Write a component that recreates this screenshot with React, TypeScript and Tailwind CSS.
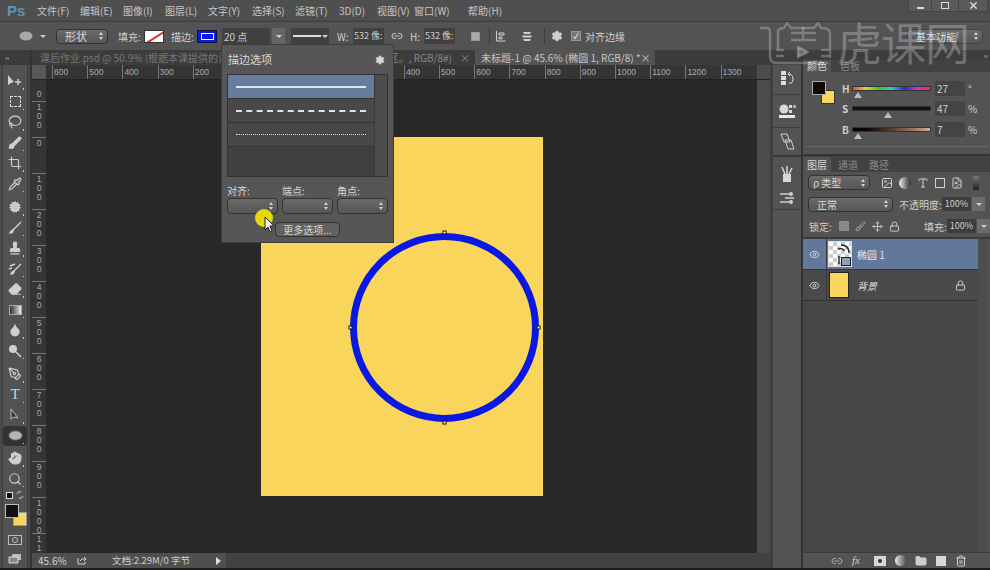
import { Brush, Crop, Droplet, Eraser, Hand, Lasso, Link2, Lock, Move, PenTool, Pipette, Search, Settings, Stamp, Trash2, X, Eye, Folder, FileImage, Type, Image } from "lucide-react";
import type { ReactNode } from "react";

const cjk = { fontFamily: '"Noto Sans CJK SC", "Liberation Sans", sans-serif' };

const menus = [
  ["文件(F)", "w-[43px]"],
  ["编辑(E)", "w-[43px]"],
  ["图像(I)", "w-[42px]"],
  ["图层(L)", "w-[43px]"],
  ["文字(Y)", "w-[44px]"],
  ["选择(S)", "w-[43px]"],
  ["滤镜(T)", "w-[44px]"],
  ["3D(D)", "w-[38px]"],
  ["视图(V)", "w-[37px]"],
  ["窗口(W)", "w-[54px]"],
  ["帮助(H)", "w-[40px]"],
];

const hRuler = ["600", "500", "400", "300", "200", "100", "0", "100", "200", "300", "400", "500", "600", "700", "800", "900", "1000", "1100", "1200", "1300"];
const vRuler = ["100", "0", "100", "200", "300", "400", "500", "600", "700", "800", "900", "1000"];

function Caret({ className = "" }: { className?: string }) {
  return <div className={"flex flex-col gap-[2px] " + className}>
    <div className="w-0 h-0 border-x-[2.5px] border-x-transparent border-b-[3px] border-b-[#d0d0d0]" />
    <div className="w-0 h-0 border-x-[2.5px] border-x-transparent border-t-[3px] border-t-[#d0d0d0]" />
  </div>;
}

function Down() {
  return <div className="w-0 h-0 border-x-[3px] border-x-transparent border-t-[3px] border-t-[#d0d0d0]" />;
}

function Select({ className, label }: { className: string; label?: string }) {
  return (
    <div className={"flex items-center justify-between rounded-sm border border-[#333] bg-gradient-to-b from-[#6a6a6a] to-[#565656] pl-2 pr-1 text-[#d8d8d8] " + className}>
      <span>{label}</span>
      <Caret />
    </div>
  );
}

function Tool({ children, active, sep }: { children: ReactNode; active?: boolean; sep?: "sm" | "lg" }) {
  return (
    <div className={"relative flex h-[20.5px] shrink-0 items-center justify-center " + (active ? "rounded-sm bg-[#333] " : "") + (sep === "lg" ? "mb-[3px] " : sep === "sm" ? "mb-[2px] " : "")}>
      {children}
      <div className="absolute bottom-[2px] right-[3px] h-[1.5px] w-[1.5px] bg-[#ccc]" />
    </div>
  );
}

const ic = "text-[#cfcfcf]";

function Toolbar() {
  return (
    <div className="flex w-[32px] shrink-0 flex-col border-r-2 border-[#333] bg-[#4a4a4a]">
      <div className="flex h-[15px] items-center bg-[#3c3c3c] pl-[5px] text-[7px] leading-none text-[#ccc]">››</div>
      <div className="mx-[2px] flex flex-1 flex-col border-x border-[#3d3d3d] bg-[#525252] pt-[6px]">
        <Tool>
          <svg width="18" height="14" viewBox="0 0 18 14"><path d="M2 1v10l3-2 3-1z" fill="#d0d0d0" /><path d="M12 5v6M9 8h6" stroke="#d0d0d0" strokeWidth="1.4" /></svg>
        </Tool>
        <Tool>
          <div className="h-[11px] w-[11px] border border-dashed border-[#d8d8d8]" />
        </Tool>
        <Tool><Lasso size={14} className={ic} /></Tool>
        <Tool><Brush size={14} className={ic} fill="#cfcfcf" /></Tool>
        <Tool><Crop size={14} className={ic} /></Tool>
        <Tool sep="lg"><Pipette size={14} className={ic} /></Tool>
        <Tool>
          <svg width="14" height="14" viewBox="0 0 14 14"><circle cx="7" cy="7" r="4.5" fill="#c8c8c8" stroke="#ddd" strokeDasharray="1.5 1" strokeWidth="2" /></svg>
        </Tool>
        <Tool>
          <svg width="14" height="14" viewBox="0 0 14 14"><path d="M13 1 5 9" stroke="#d0d0d0" strokeWidth="1.4" /><path d="M5 8 2 10l-1 3 4-1 1-3z" fill="#d0d0d0" /></svg>
        </Tool>
        <Tool><Stamp size={14} className={ic} fill="#cfcfcf" /></Tool>
        <Tool>
          <svg width="14" height="14" viewBox="0 0 14 14"><path d="M13 2 6 9M2 4l5-2M1 7l3-1" stroke="#d0d0d0" strokeWidth="1.4" /><path d="M6 8 3 10l-1 3 4-1 1-3z" fill="#d0d0d0" /></svg>
        </Tool>
        <Tool><Eraser size={14} className={ic} fill="#cfcfcf" /></Tool>
        <Tool>
          <div className="h-[10px] w-[13px] border border-[#aaa] bg-gradient-to-r from-[#333] to-[#eee]" />
        </Tool>
        <Tool><Droplet size={14} className={ic} fill="#cfcfcf" /></Tool>
        <Tool sep="lg">
          <svg width="14" height="14" viewBox="0 0 14 14"><circle cx="5" cy="5" r="4" fill="#d0d0d0" /><path d="m8 8 5 5" stroke="#d0d0d0" strokeWidth="1.6" /></svg>
        </Tool>
        <Tool><PenTool size={14} className={ic} /></Tool>
        <Tool><span className="text-[15px] leading-none text-[#d0d0d0]" style={{ fontFamily: '"Liberation Serif", serif' }}>T</span></Tool>
        <Tool>
          <svg width="14" height="14" viewBox="0 0 14 14"><path d="M3 1v10l3-2 4 1z" fill="#333" stroke="#bbb" /></svg>
        </Tool>
        <Tool active sep="sm">
          <svg width="15" height="11" viewBox="0 0 15 11"><ellipse cx="7.5" cy="5.5" rx="6.5" ry="4.5" fill="#b5b5b5" stroke="#777" /></svg>
        </Tool>
        <Tool><Hand size={14} className={ic} fill="#cfcfcf" /></Tool>
        <Tool><Search size={14} className={ic} /></Tool>
        <div className="flex h-[12px] shrink-0 items-center justify-between px-[3px]">
          <div className="relative h-[7px] w-[7px] border border-[#ddd] bg-[#111]" />
          <svg width="8" height="8" viewBox="0 0 8 8"><path d="M1 3a3 3 0 0 1 4-2M7 5a3 3 0 0 1-4 2" stroke="#ddd" fill="none" /></svg>
        </div>
        <div className="relative mt-[3px] h-[24px] shrink-0">
          <div className="absolute left-[10px] top-[8px] h-[14px] w-[14px] border border-[#999] bg-[#fbd65c]" />
          <div className="absolute left-[2px] top-0 h-[14px] w-[14px] border border-[#bbb] bg-[#111]" />
        </div>
        <div className="mt-[6px] flex h-[12px] shrink-0 items-center justify-center">
          <div className="flex h-[10px] w-[14px] items-center justify-center border border-[#bbb]"><div className="h-[6px] w-[6px] rounded-full border border-[#bbb]" /></div>
        </div>
        <div className="mt-[6px] flex h-[12px] shrink-0 items-center justify-center">
          <svg width="14" height="11" viewBox="0 0 14 11"><path d="M4 1h9v6H4z" fill="#bbb" /><path d="M1 4h9v6H1z" fill="#888" stroke="#ddd" /></svg>
        </div>
      </div>
    </div>
  );
}

function Slider({ label, value, unit, track, pos }: { label: string; value: string; unit: string; track: string; pos: string }) {
  return (
    <div className="flex h-[20.5px] items-center">
      <div className="w-[9px] text-[10px] font-bold text-[#cfcfcf]">{label}</div>
      <div className="relative ml-[1px] w-[79px]">
        <div className={"h-[5px] border border-[#333] " + track} />
        <div className={"absolute top-[6px] h-0 w-0 border-x-[4px] border-x-transparent border-b-[6px] border-b-[#bdbdbd] " + pos} />
      </div>
      <div className="ml-[4px] flex h-[15px] w-[30px] items-center bg-[#444] pl-[2px] text-[10px] text-[#d0d0d0]">{value}</div>
      <div className="ml-[3px] text-[10px] text-[#cfcfcf]">{unit}</div>
    </div>
  );
}

function ColorPanel() {
  return (
    <div className="flex h-[106px] shrink-0 flex-col border-b-2 border-[#333] bg-[#535353]">
      <div className="flex h-[10px] items-center justify-end bg-[#3d3d3d] pr-[2px] text-[7px] leading-none text-[#ccc]">››</div>
      <div className="flex h-[12px] items-end bg-[#424242] text-[10px] leading-[12px]">
        <div className="flex h-[12px] w-[28px] items-center justify-center bg-[#535353] text-[#d8d8d8]">颜色</div>
        <div className="ml-[5px] flex h-[12px] w-[28px] items-center justify-center text-[#8b8b8b]">色板</div>
      </div>
      <div className="flex flex-1 pl-[9px] pt-[9px]">
        <div className="relative h-[24px] w-[24px] shrink-0">
          <div className="absolute left-[9px] top-[9px] h-[14px] w-[14px] border border-[#333] bg-[#fbd65c]" />
          <div className="absolute left-0 top-0 h-[14px] w-[14px] border border-[#aaa] bg-[#120b07]" />
        </div>
        <div className="ml-[6px] -mt-[3px]">
          <Slider label="H" value="27" unit="°" track="bg-[linear-gradient(to_right,#e44,#ec3,#3c3,#3cc,#23c,#c3c,#e35)]" pos="left-[2px]" />
          <Slider label="S" value="47" unit="%" track="bg-[#111]" pos="left-[32px]" />
          <Slider label="B" value="7" unit="%" track="bg-gradient-to-r from-[#000] to-[#d9a988]" pos="left-[2px]" />
        </div>
      </div>
      <div className="mx-[2px] mb-[7px] h-px bg-[#666]" />
    </div>
  );
}

function LayerRow({ selected, children }: { selected?: boolean; children: ReactNode }) {
  return (
    <div className={"flex h-[31px] shrink-0 items-center border-b border-[#333] " + (selected ? "bg-[#62789a]" : "bg-[#4a4a4a]")}>
      <div className="flex h-full w-[24px] items-center justify-center border-r border-[#3a3a3a]">
        <Eye size={11} className="text-[#d8d8d8]" />
      </div>
      {children}
    </div>
  );
}

function LayersPanel() {
  return (
    <div className="flex min-h-0 flex-1 flex-col bg-[#535353]">
      <div className="flex h-[16px] shrink-0 items-end bg-[#424242] text-[10px] leading-[15px] text-[#8b8b8b]">
        <div className="flex h-[15px] w-[28px] items-center justify-center bg-[#535353] text-[#d8d8d8]">图层</div>
        <div className="ml-[3px] w-[28px] text-center">通道</div>
        <div className="ml-[3px] w-[28px] text-center">路径</div>
      </div>
      <div className="flex h-[21px] shrink-0 items-center pl-[5px]">
        <Select className="h-[15px] w-[62px] !pl-1 text-[10px]" label="ρ 类型" />
        <div className="ml-[11px] flex items-center gap-[6px] text-[#d0d0d0]">
          <Image size={12} />
          <div className="h-[12px] w-[12px] rounded-full bg-gradient-to-r from-[#eee] to-[#333]" />
          <Type size={12} />
          <div className="h-[10px] w-[10px] border border-[#d0d0d0]" />
          <FileImage size={12} />
        </div>
        <div className="ml-[10px] h-[14px] w-[6px] bg-gradient-to-b from-[#777] to-[#222]" />
      </div>
      <div className="flex h-[22px] shrink-0 items-center pl-[5px] text-[10px] text-[#d0d0d0]">
        <Select className="h-[15px] w-[85px] text-[10px]" label="正常" />
        <span className="ml-[6px] w-[43px] whitespace-nowrap">不透明度:</span>
        <div className="flex h-[14px] w-[29px] items-center justify-center bg-[#3d3d3d] text-[9px]">100%</div>
        <div className="ml-[1px] flex h-[14px] w-[13px] items-center justify-center bg-[#6b6b6b]"><Down /></div>
      </div>
      <div className="flex h-[24px] shrink-0 items-center border-b-2 border-[#3a3a3a] pl-[6px] text-[10px] text-[#d0d0d0]">
        <span className="w-[30px]">锁定:</span>
        <div className="flex items-center gap-[6px]">
          <div className="h-[10px] w-[10px] bg-[#8a8a8a]" />
          <Brush size={11} className="text-[#aaa]" />
          <Move size={11} />
          <Lock size={11} />
        </div>
        <span className="ml-[24px] w-[23px]">填充:</span>
        <div className="flex h-[14px] w-[29px] items-center justify-center bg-[#3d3d3d] text-[9px]">100%</div>
        <div className="ml-[1px] flex h-[14px] w-[13px] items-center justify-center bg-[#6b6b6b]"><Down /></div>
      </div>
      <div className="flex min-h-0 flex-1">
        <div className="flex w-[175px] flex-col bg-[#474747]">
          <LayerRow selected>
            <div className="relative ml-[1px] h-[26px] w-[24px] border border-[#ddd] bg-[repeating-conic-gradient(#ccc_0_25%,#fff_0_50%)] bg-[length:8px_8px]">
              <svg className="absolute left-0 top-0" width="22" height="24" viewBox="0 0 22 24"><path d="M12 3c5 0 8 3 8 8M9 7c3-1 6 0 6 2M10 14v8" stroke="#222" strokeWidth="1.4" fill="none" /></svg>
              <div className="absolute bottom-0 right-0 h-[9px] w-[10px] border border-[#222] bg-[#8da0b8]" />
            </div>
            <span className="ml-[5px] text-[10px] text-[#e0e4ea]">椭圆 1</span>
          </LayerRow>
          <LayerRow>
            <div className="ml-[2px] h-[26px] w-[20px] border border-[#222] bg-[#fbd65c]" />
            <span className="ml-[8px] text-[10px] italic text-[#ddd]">背景</span>
            <Lock size={11} className="ml-auto mr-[12px] text-[#cfcfcf]" />
          </LayerRow>
        </div>
        <div className="w-[10px] bg-[#4d4d4d]" />
      </div>
      <div className="flex h-[16px] shrink-0 items-center gap-[9px] border-t border-[#3a3a3a] bg-[#535353] pl-[28px] text-[#cfcfcf]">
        <Link2 size={12} className="text-[#aaa]" />
        <span className="w-[13px] text-[11px] italic" style={{ fontFamily: '"Liberation Serif", serif' }}>fx</span>
        <div className="flex h-[10px] w-[12px] items-center justify-center bg-[#d8d8d8]"><div className="h-[4px] w-[4px] rounded-full bg-[#333]" /></div>
        <div className="h-[11px] w-[11px] rounded-full bg-gradient-to-r from-[#eee] to-[#555]" />
        <Folder size={12} fill="#cfcfcf" />
        <div className="h-[10px] w-[10px] bg-[#d8d8d8]" />
        <Trash2 size={12} />
      </div>
    </div>
  );
}

function Dock() {
  return (
    <div className="flex w-[33px] shrink-0 flex-col border-r-2 border-[#333] bg-[#3f3f3f] pl-[3px]">
      <div className="h-[15px] shrink-0" />
      <div className="flex flex-1 flex-col items-center bg-[#535353] text-[#cfcfcf]">
        <div className="flex h-[30px] w-full items-center justify-center border-b border-[#3e3e3e] pb-[4px]">
          <div className="flex flex-col gap-[1px]"><div className="h-[4px] w-[5px] bg-[#ddd]" /><div className="h-[4px] w-[5px] bg-[#ddd]" /><div className="h-[4px] w-[5px] bg-[#ddd]" /></div>
          <svg className="ml-[1px]" width="7" height="12" viewBox="0 0 7 12"><path d="M1 2q5 0 5 5t-4 4M1 2l2-2M1 2l2 2" stroke="#ddd" fill="none" /></svg>
        </div>
        <div className="flex h-[33px] w-full items-center justify-center border-b border-[#3e3e3e]">
          <svg width="18" height="15" viewBox="0 0 18 15"><circle cx="6" cy="5" r="4.5" fill="#d8d8d8" /><rect x="11" y="1" width="3" height="3" fill="#d8d8d8" /><rect x="11" y="6" width="3" height="3" fill="#d8d8d8" /><rect x="15" y="1" width="3" height="3" fill="#aaa" /><rect x="1" y="11" width="16" height="3" fill="#e8e8e8" /></svg>
        </div>
        <div className="flex h-[29px] w-full items-center justify-center border-b-2 border-[#3a3a3a]">
          <svg width="17" height="17" viewBox="0 0 17 17" fill="none" stroke="#d0d0d0"><path d="M2 1h6l3 8H5zM6 7h6l3 9H9z" /></svg>
        </div>
        <div className="flex h-[53px] w-full flex-col items-center gap-[10px] border-b border-[#3e3e3e] pt-[9px]">
          <svg width="14" height="16" viewBox="0 0 14 16"><path d="M3 8h8v8H3z" fill="#d8d8d8" /><path d="M5 8 2 1M7 8V0M9 8l3-6" stroke="#d8d8d8" strokeWidth="1.5" /></svg>
          <svg width="16" height="12" viewBox="0 0 16 12"><path d="M1 2h9M1 10h9M6 6h9" stroke="#d0d0d0" strokeWidth="1.6" /><circle cx="12" cy="2" r="2" fill="#d0d0d0" /><circle cx="12" cy="10" r="2" fill="#d0d0d0" /></svg>
        </div>
      </div>
    </div>
  );
}

function Watermark() {
  return (
    <div className="pointer-events-none absolute left-[760px] top-[18px] flex h-[50px] items-start text-white/25">
      <svg width="76" height="48" viewBox="0 0 76 48" fill="none" stroke="currentColor" strokeWidth="2.4" strokeLinecap="round" strokeLinejoin="round">
        <path d="M1 10h6q3 0 3 4v24q0 7 7 7h50" />
        <path d="M18 30V14q0-4 6-4l3-5 4 5h23l4-5 3 5q9 0 9 5v24" />
        <path d="M32 15h23M32 22h23M43 10v12" />
        <path d="M38 29v10l10-5z" fill="currentColor" />
        <path d="M17 32h6M17 38h6M62 32h6M62 38h6" />
      </svg>
      <div className="-mt-[4px] ml-[1px] text-[45px] leading-[56px] tracking-[-1px]" style={cjk}>虎课网</div>
    </div>
  );
}

function StrokePopup() {
  return (
    <div className="absolute left-[221px] top-[44px] flex h-[199px] w-[173px] flex-col border border-[#3d3d3d] bg-[#565656] px-[5px] text-[10px] text-[#d6d6d6]">
      <div className="flex h-[29px] shrink-0 items-center justify-between pl-[1px] pr-[3px] text-[11px]">
        <span>描边选项</span>
        <Settings size={10} fill="#d6d6d6" />
      </div>
      <div className="flex h-[103px] shrink-0 border border-[#333] bg-[#404040]">
        <div className="flex flex-1 flex-col">
          <div className="flex h-[24px] items-center border-b border-[#333] bg-[#677c9c] px-[8px]"><div className="h-[2px] w-full bg-[#dbe8f2]" /></div>
          <div className="flex h-[24px] items-center border-b border-[#333] bg-[#484848] px-[8px]"><div className="w-full border-t-2 border-dashed border-[#e2e2e2]" /></div>
          <div className="flex h-[24px] items-center border-b border-[#333] bg-[#484848] px-[8px]"><div className="w-full border-t border-dotted border-[#ddd]" /></div>
        </div>
        <div className="w-[13px] border-l border-[#3a3a3a] bg-[#4c4c4c]" />
      </div>
      <div className="mt-[6px] flex gap-[4px]">
        {["对齐:", "端点:", "角点:"].map((t) => (
          <div key={t} className="w-[51px]">
            <div className="h-[15px] leading-[15px]">{t}</div>
            <Select className="h-[16px] w-full" />
          </div>
        ))}
      </div>
      <div className="mt-[8px] flex justify-end pr-[48px]">
        <div className="flex h-[15px] w-[65px] items-center justify-center rounded-sm border border-[#333] bg-[#616161]">更多选项...</div>
      </div>
    </div>
  );
}

function Canvas() {
  return (
    <div className="relative min-h-0 flex-1 overflow-hidden bg-[#282828]">
      <div className="absolute left-[215px] top-[57px] h-[359px] w-[282px] bg-[#fad55c]">
        <svg width="282" height="359" viewBox="0 0 282 359">
          <circle cx="183.5" cy="190.5" r="91" fill="none" stroke="#0a18e4" strokeWidth="7" />
          {[[183.5, 95.5], [183.5, 285.5], [89.5, 190.5], [277.5, 190.5]].map(([x, y]) => (
            <rect key={x * y} x={x - 1.5} y={y - 1.5} width="3" height="3" fill="#fff" stroke="#111" strokeWidth="1" />
          ))}
        </svg>
      </div>
    </div>
  );
}

export default function App() {
  return (
    <div className="relative flex h-[570px] w-[990px] flex-col overflow-hidden bg-[#222]" style={cjk}>
      <div className="relative flex h-[22px] shrink-0 items-center border-b border-[#3c3c3c] bg-[#4f4f4f] pl-[7px] text-[10px] text-[#c6c6c6]">
        <span className="w-[30px] text-[15px] font-bold leading-none text-[#5b93bd]" style={{ fontFamily: '"Liberation Sans", sans-serif' }}>Ps</span>
        {menus.map(([t, w]) => (
          <span key={t} className={"whitespace-nowrap " + w}>{t}</span>
        ))}
        <div className="absolute right-[2px] top-0 flex h-[12px] text-[#ddd]">
          <div className="flex w-[24px] items-end justify-center border border-t-0 border-[#444] bg-[#5a5a5a] pb-[2px]"><div className="h-[2px] w-[7px] bg-[#ddd]" /></div>
          <div className="flex w-[26px] items-center justify-center border-b border-[#444] bg-[#5a5a5a]"><div className="h-[7px] w-[8px] border border-[#ddd]" /></div>
          <div className="flex w-[30px] items-center justify-center border border-t-0 border-[#444] bg-[#5a5a5a]"><X size={11} strokeWidth={3} /></div>
        </div>
      </div>

      <div className="flex h-[28px] shrink-0 items-center bg-[#535353] pl-[19px] text-[10px] text-[#cfcfcf]">
        <svg width="14" height="10" viewBox="0 0 14 10"><ellipse cx="7" cy="5" rx="6.5" ry="4.5" fill="#a8a8a8" /></svg>
        <div className="ml-[7px]"><Down /></div>
        <Select className="ml-[10px] h-[15px] w-[52px] text-[11px]" label="形状" />
        <span className="ml-[10px] w-[26px]">填充:</span>
        <div className="relative h-[13px] w-[20px] overflow-hidden border border-[#333] bg-white">
          <div className="absolute left-[-2px] top-[5px] h-[1.5px] w-[26px] -rotate-[32deg] bg-[#c33]" />
        </div>
        <span className="ml-[7px] w-[26px]">描边:</span>
        <div className="flex h-[13px] w-[20px] items-center justify-center border border-[#113] bg-[#0a18e4]"><div className="h-[7px] w-[13px] border border-white" /></div>
        <div className="ml-[5px] flex h-[16px] w-[48px] items-center bg-[#404040] pl-[2px] text-[#ccc]">20 点</div>
        <div className="ml-[2px] flex h-[16px] w-[13px] items-center justify-center bg-[#666]"><Down /></div>
        <div className="ml-[6px] flex h-[16px] w-[38px] items-center gap-[1px] bg-[#404040] pl-[2px]"><div className="h-[1.5px] w-[28px] bg-[#ddd]" /><Down /></div>
        <span className="ml-[8px] w-[16px]">W:</span>
        <div className="flex h-[16px] w-[31px] items-center whitespace-nowrap bg-[#404040] pl-[1px] text-[9px]">532 像:</div>
        <Link2 size={12} className="ml-[7px]" />
        <span className="ml-[4px] w-[14px] pl-[3px]">H:</span>
        <div className="ml-[3px] flex h-[16px] w-[31px] items-center whitespace-nowrap bg-[#404040] pl-[1px] text-[9px]">532 像:</div>
        <div className="ml-[16px] h-[9px] w-[9px] border border-[#999] bg-[#aaa]" />
        <div className="ml-[9px] h-[16px] w-px bg-[#3c3c3c]" />
        <svg className="ml-[5px]" width="12" height="12" viewBox="0 0 12 12"><path d="M1.5 1v10h9M4 3h5v2H4zM4 7h3v2H4z" stroke="#cfcfcf" fill="none" /></svg>
        <svg className="ml-[13px]" width="14" height="13" viewBox="0 0 14 13"><path d="M3 2h8l-1 2H4zM2 5.5h10l-1 2H3zM3 9h8l-1 2H4z" fill="#cfcfcf" /></svg>
        <div className="ml-[10px] h-[16px] w-px bg-[#3c3c3c]" />
        <Settings size={12} className="ml-[6px]" fill="#cfcfcf" />
        <div className="ml-[8px] flex h-[10px] w-[10px] items-center justify-center border border-[#999] bg-[#777] text-[8px] leading-none text-white">✓</div>
        <span className="ml-[4px] text-[10px]">对齐边缘</span>
        <Select className="ml-auto mr-[7px] h-[15px] w-[76px] !border-[#444] text-[10px]" label="基本功能" />
      </div>

      <div className="flex min-h-0 flex-1">
        <Toolbar />
        <div className="flex w-[738px] shrink-0 flex-col">
          <div className="flex h-[15px] shrink-0 bg-[#3c3c3c] text-[10px] leading-[15px]">
            <div className="flex w-[443px] justify-between overflow-hidden whitespace-nowrap pl-[8px] pr-[5px] text-[#777]">
              <span>课后作业.psd @ 50.9% (根据本课提供的素</span>
              <span className="text-[#8a8a8a]"><span className="mr-[8px]">区。, RGB/8#)</span>×</span>
            </div>
            <div className="flex w-[180px] justify-between whitespace-nowrap bg-[#535353] pl-[6px] pr-[5px] text-[#c8c8c8]">
              <span>未标题-1 @ 45.6% (椭圆 1, RGB/8) *</span>
              <span>×</span>
            </div>
          </div>
          <div className="flex h-[15px] shrink-0 border-b border-[#222]">
            <div className="w-[14px] shrink-0 bg-[#585858]" />
            <div className="flex w-[711px] shrink-0 overflow-hidden bg-[#353535] pl-[6px] text-[8.5px] leading-[14px] text-[#aaa]" style={{ fontFamily: '"Liberation Sans", sans-serif' }}>
              {hRuler.map((n, i) => (
                <div key={i} className="w-[35.2px] shrink-0 border-l border-[#777] pl-[1px]">{n}</div>
              ))}
            </div>
            <div className="flex-1 bg-[#4c4c4c]" />
          </div>
          <div className="flex min-h-0 flex-1">
            <div className="flex w-[14px] shrink-0 flex-col overflow-hidden bg-[#353535] text-center text-[8.5px] leading-[9px] text-[#aaa]" style={{ fontFamily: '"Liberation Sans", sans-serif' }}>
              <div className="flex h-[21px] shrink-0 items-end justify-center pb-[2px]">0</div>
              {vRuler.map((n, i) => (
                <div key={i} className="h-[36px] shrink-0 border-t border-[#777] pt-[1px]">
                  {n.split("").map((c, j) => <div key={j}>{c}</div>)}
                </div>
              ))}
              <div className="border-t border-[#777] pt-[1px]"><div>1</div><div>1</div></div>
            </div>
            <Canvas />
            <div className="w-[13px] shrink-0 bg-[#4c4c4c]" />
          </div>
          <div className="flex h-[15px] shrink-0">
            <div className="flex w-[194px] items-center bg-[#4f4f4f] pl-[6px] text-[10px] leading-none text-[#cfcfcf]">
              <span className="w-[39px]">45.6%</span>
              <svg width="10" height="9" viewBox="0 0 10 9"><path d="M1 2v6h7V6M3 5l2-2h4M7 1l2 2-2 2" stroke="#cfcfcf" fill="none" /></svg>
              <span className="ml-[25px] w-[100px] whitespace-nowrap text-[9.5px]">文档:2.29M/0 字节</span>
              <div className="ml-[4px] h-0 w-0 border-y-[4px] border-l-[5px] border-y-transparent border-l-[#ddd]" />
            </div>
            <div className="flex-1 bg-[#424242]" />
          </div>
        </div>
        <Dock />
        <div className="flex min-w-0 flex-1 flex-col">
          <ColorPanel />
          <LayersPanel />
        </div>
      </div>
      <div className="h-[2px] shrink-0 bg-[#1c1c1c]" />

      <StrokePopup />
      <Watermark />

      <div className="absolute left-[255px] top-[209px] h-[18px] w-[18px] rounded-full bg-[#e6d80f]" />
      <svg className="absolute left-[264px] top-[216px]" width="12" height="17" viewBox="0 0 12 17">
        <path d="M1 1v13l3-3 2 5 2-1-2-5h4z" fill="#eee" stroke="#222" />
      </svg>
    </div>
  );
}
